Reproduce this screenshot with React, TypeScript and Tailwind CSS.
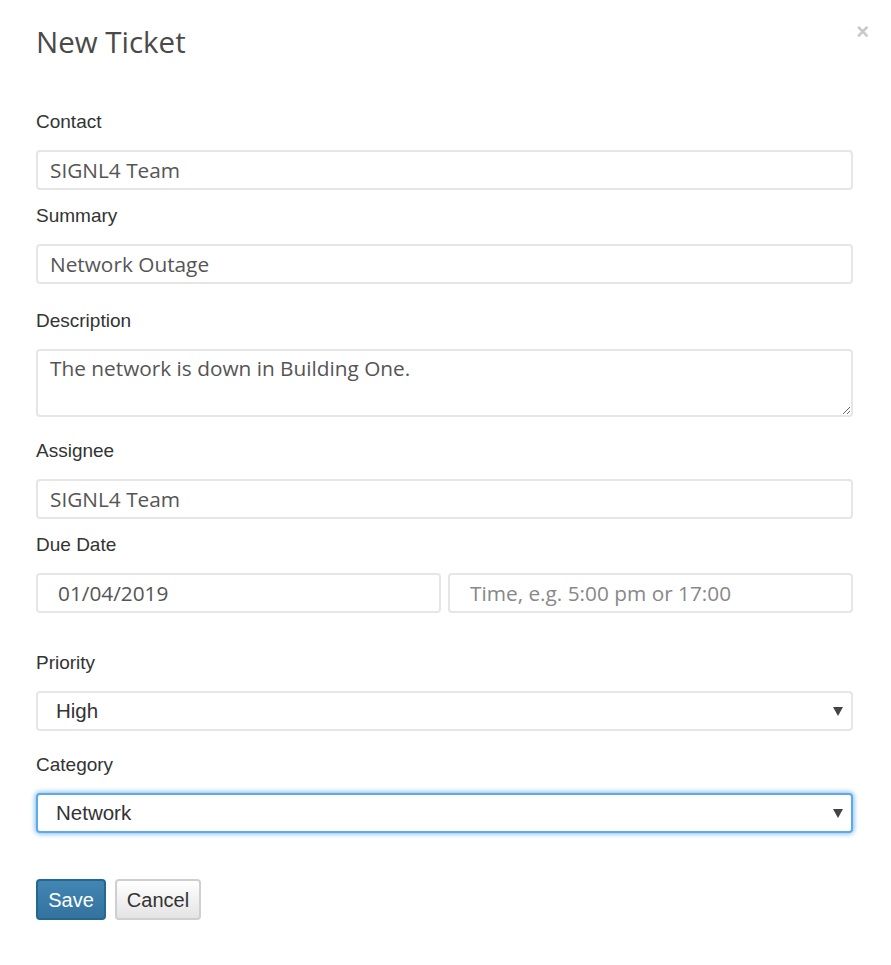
const label = "block text-[19px] leading-[20px] text-[#333] mb-[18px] font-['Liberation_Sans',Arial,sans-serif]";
const field =
  "block w-full h-[40px] rounded-[4px] border-2 border-[#e6e6e6] bg-white px-[12px] text-[20.8px] text-[#555] outline-none font-['Open_Sans',sans-serif] placeholder:text-[#888]";

function Caret() {
  return (
    <svg width="10" height="9" viewBox="0 0 10 9" className="absolute right-[10px] top-[16px]">
      <path d="M0 0 L10 0 L5 9 Z" fill="#444" />
    </svg>
  );
}

function Select({ value, focused }: { value: string; focused?: boolean }) {
  return (
    <div className="relative">
      <div
        className={`h-[40px] rounded-[4px] border-2 bg-white pl-[18px] flex items-center text-[20.5px] text-[#333] font-['Liberation_Sans',Arial,sans-serif] ${
          focused ? "border-[#5fa9e6] shadow-[0_0_5px_1px_rgba(102,175,233,0.85)]" : "border-[#e6e6e6]"
        }`}
      >
        {value}
      </div>
      <Caret />
    </div>
  );
}

export default function App() {
  return (
    <div className="min-h-screen bg-white pl-[36px] pr-[38px] relative">
      {/* header */}
      <button className="absolute right-[22px] top-[21px] text-[22px] font-bold text-[#c8c8c8] leading-none font-['Liberation_Sans',Arial,sans-serif]">
        ×
      </button>
      <h1 className="pt-[22px] text-[29.5px] leading-[40px] text-[#4a4a4a] font-['Open_Sans',sans-serif]">New Ticket</h1>

      <form className="mt-[50px]">
        <label className={label}>Contact</label>
        <input className={field} defaultValue="SIGNL4 Team" />

        <label className={`${label} mt-[16px]`}>Summary</label>
        <input className={field} defaultValue="Network Outage" />

        <label className={`${label} mt-[27px]`}>Description</label>
        <textarea
          className={`${field} h-[68px] pt-[4px] leading-[26px] resize-y`}
          defaultValue="The network is down in Building One."
        />

        <label className={`${label} mt-[24px]`}>Assignee</label>
        <input className={field} defaultValue="SIGNL4 Team" />

        <label className={`${label} mt-[16px]`}>Due Date</label>
        <div className="flex gap-[7px]">
          <input className={`${field} pl-[20px]`} defaultValue="01/04/2019" />
          <input className={`${field} pl-[20px]`} placeholder="Time, e.g. 5:00 pm or 17:00" />
        </div>

        <label className={`${label} mt-[40px]`}>Priority</label>
        <Select value="High" />

        <label className={`${label} mt-[24px]`}>Category</label>
        <Select value="Network" focused />

        <div className="mt-[46px] flex gap-[9px] font-['Liberation_Sans',Arial,sans-serif]">
          <button
            type="button"
            className="h-[41px] w-[70px] rounded-[4px] border-2 border-[#23688e] bg-gradient-to-b from-[#4286b3] to-[#33739e] text-[20px] text-white"
          >
            Save
          </button>
          <button
            type="button"
            className="h-[41px] w-[86px] rounded-[4px] border-2 border-[#cfcfcf] bg-gradient-to-b from-white to-[#e4e4e4] text-[20px] text-[#333]"
          >
            Cancel
          </button>
        </div>
      </form>
    </div>
  );
}
